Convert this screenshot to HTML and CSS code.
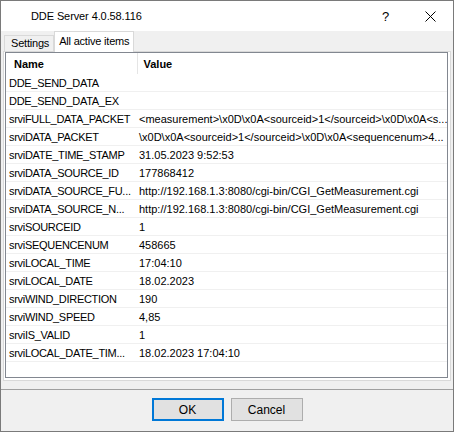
FILE: index.html
```html
<!DOCTYPE html>
<html lang="en">
<head>
  <meta charset="UTF-8">
  <title>DDE Server 4.0.58.116</title>
  <link rel="stylesheet" href="styles.css">
</head>
<body>

<div class="window">
  <div class="titlebar">
    <span class="title">DDE Server 4.0.58.116</span>
    <span class="help">?</span>
    <span class="close">
      <svg width="11" height="11" viewBox="0 0 11 11"><path d="M0.5 0.5 L10.5 10.5 M10.5 0.5 L0.5 10.5" stroke="#000" stroke-width="1" fill="none"/></svg>
    </span>
  </div>

  <div class="client">
    <div class="tabs">
      <div class="tab">Settings</div>
      <div class="tab active">All active items</div>
    </div>

    <div class="panel">
      <div class="list">
        <table>
          <thead>
            <tr><th class="col-name">Name</th><th>Value</th></tr>
          </thead>
          <tbody>
            <tr><td>DDE_SEND_DATA</td><td></td></tr>
            <tr><td>DDE_SEND_DATA_EX</td><td></td></tr>
            <tr><td>srviFULL_DATA_PACKET</td><td>&lt;measurement&gt;\x0D\x0A&lt;sourceid&gt;1&lt;/sourceid&gt;\x0D\x0A&lt;s...</td></tr>
            <tr><td>srviDATA_PACKET</td><td>\x0D\x0A&lt;sourceid&gt;1&lt;/sourceid&gt;\x0D\x0A&lt;sequencenum&gt;4...</td></tr>
            <tr><td>srviDATE_TIME_STAMP</td><td>31.05.2023 9:52:53</td></tr>
            <tr><td>srviDATA_SOURCE_ID</td><td>177868412</td></tr>
            <tr><td>srviDATA_SOURCE_FU...</td><td>http://192.168.1.3:8080/cgi-bin/CGI_GetMeasurement.cgi</td></tr>
            <tr><td>srviDATA_SOURCE_N...</td><td>http://192.168.1.3:8080/cgi-bin/CGI_GetMeasurement.cgi</td></tr>
            <tr><td>srviSOURCEID</td><td>1</td></tr>
            <tr><td>srviSEQUENCENUM</td><td>458665</td></tr>
            <tr><td>srviLOCAL_TIME</td><td>17:04:10</td></tr>
            <tr><td>srviLOCAL_DATE</td><td>18.02.2023</td></tr>
            <tr><td>srviWIND_DIRECTION</td><td>190</td></tr>
            <tr><td>srviWIND_SPEED</td><td>4,85</td></tr>
            <tr><td>srviIS_VALID</td><td>1</td></tr>
            <tr><td>srviLOCAL_DATE_TIM...</td><td>18.02.2023 17:04:10</td></tr>
          </tbody>
        </table>
      </div>
    </div>

    <div class="footer">
      <button class="btn default">OK</button>
      <button class="btn">Cancel</button>
    </div>
  </div>
</div>

</body>
</html>
```

FILE: styles.css
```css
body {
  margin: 0;
  font-family: "Liberation Sans", Arial, sans-serif;
  background-color: #f0f0f0;
}
.window {
  width: 454px;
  height: 432px;
  box-sizing: border-box;
  border: 1px solid #7a7a7a;
  display: flex;
  flex-direction: column;
  background-color: #f0f0f0;
}
.titlebar {
  height: 30px;
  background-color: #fff;
  display: flex;
  align-items: center;
  font-size: 11px;
  color: #000;
}
.title {
  margin-left: 30px;
  flex: 1;
  letter-spacing: -0.1px;
}
.help {
  width: 14px;
  margin-right: 29px;
  font-size: 13px;
}
.close {
  width: 11px;
  height: 11px;
  margin-right: 17px;
  display: flex;
}
.client {
  flex: 1;
  display: flex;
  flex-direction: column;
  padding: 0 2px;
}
.tabs {
  display: flex;
  align-items: flex-end;
  height: 20px;
  margin-left: 1px;
  font-size: 11px;
  letter-spacing: -0.2px;
}
.tab {
  height: 16px;
  line-height: 15px;
  padding: 0 4px 0 6px;
  border: 1px solid #d9d9d9;
  border-bottom: none;
  box-sizing: border-box;
  background-color: #f0f0f0;
  color: #000;
}
.tab.active {
  height: 21px;
  line-height: 18px;
  padding: 0 4px 0 4px;
  background-color: #fff;
  margin-bottom: -1px;
  position: relative;
}
.panel {
  height: 330px;
  box-sizing: border-box;
  border: 1px solid #d9d9d9;
  background-color: #fff;
  padding: 0 2px 2px 1px;
}
.list {
  height: 326px;
  box-sizing: border-box;
  border: 1px solid #828790;
  background-color: #fff;
  overflow: hidden;
}
table {
  border-collapse: collapse;
  table-layout: fixed;
  width: 100%;
  font-size: 11px;
  color: #000;
}
th {
  height: 21px;
  text-align: left;
  font-weight: bold;
  padding: 0 0 0 6px;
  white-space: nowrap;
}
th.col-name {
  box-sizing: border-box;
  width: 131px;
  padding-left: 8px;
  border-right: 1px solid #e5e5e5;
}
td {
  height: 17px;
  padding: 0 0 0 2px;
  white-space: nowrap;
  overflow: hidden;
  border-bottom: 1px solid #f0f0f0;
}
td:first-child {
  padding-left: 3px;
  letter-spacing: -0.3px;
}
.footer {
  flex: 1;
  margin: 8px -2px 0;
  border-top: 1px solid #a0a0a0;
  display: flex;
  justify-content: center;
  align-items: flex-start;
  gap: 7px;
  padding-top: 8px;
}
.btn {
  width: 72px;
  height: 23px;
  font-family: "Liberation Sans", Arial, sans-serif;
  font-size: 12px;
  background-color: #e1e1e1;
  border: 1px solid #adadad;
  color: #000;
  padding: 0;
}
.btn.default {
  border: 2px solid #0078d7;
}
```
